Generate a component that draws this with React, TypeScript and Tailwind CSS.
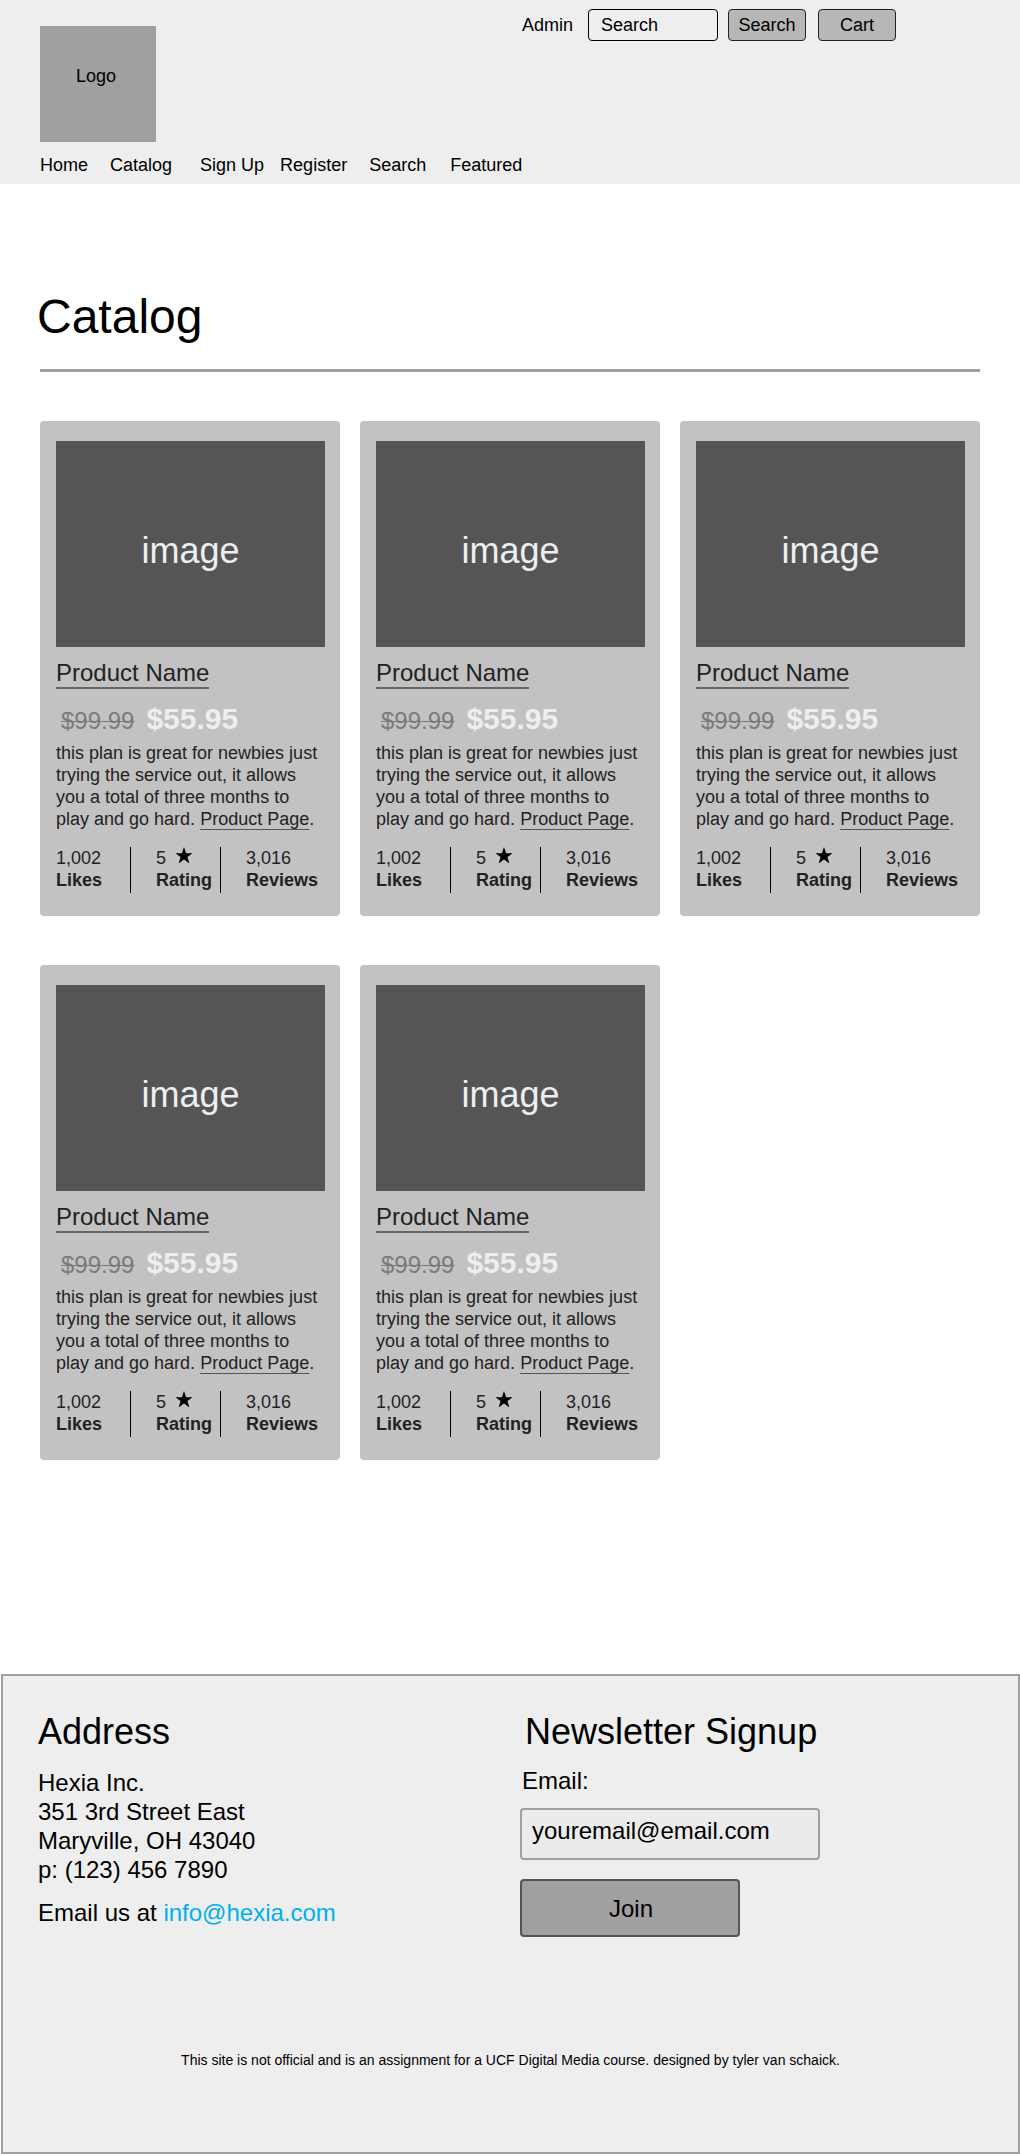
import React from "react";

type NavItem = { label: string; spacing: string };

const navItems: NavItem[] = [
  { label: "Home", spacing: "mr-[22px]" },
  { label: "Catalog", spacing: "mr-7" },
  { label: "Sign Up", spacing: "mr-4" },
  { label: "Register", spacing: "mr-[22px]" },
  { label: "Search", spacing: "mr-6" },
  { label: "Featured", spacing: "" },
];

type Product = {
  id: number;
  name: string;
  oldPrice: string;
  price: string;
  likes: string;
  rating: string;
  reviews: string;
};

const products: Product[] = [1, 2, 3, 4, 5].map((id) => ({
  id,
  name: "Product Name",
  oldPrice: "$99.99",
  price: "$55.95",
  likes: "1,002",
  rating: "5",
  reviews: "3,016",
}));

function Star() {
  return (
    <svg
      viewBox="0 0 18 17"
      className="ml-[9px] h-[17px] w-[18px]"
      fill="#000"
      aria-hidden="true"
    >
      <path d="M9 0 L11.1 6.2 H17.6 L12.4 10.1 L14.4 16.4 L9 12.6 L3.6 16.4 L5.6 10.1 L0.4 6.2 H6.9 Z" />
    </svg>
  );
}

function Header() {
  return (
    <header className="bg-[#eeeeee] pb-2">
      <div className="flex items-start">
        <div className="w-1/2 pl-10 pt-[26px]">
          <a
            href="#"
            className="flex h-[116px] w-[116px] justify-center bg-[#a0a0a0] pt-[39px] pr-1"
          >
            Logo
          </a>
        </div>
        <div className="flex w-1/2 items-center pl-3 pt-[9px]">
          <a href="#" className="mr-[15px]">
            Admin
          </a>
          <form
            className="flex items-center"
            onSubmit={(e) => e.preventDefault()}
          >
            <input
              type="search"
              aria-label="Search"
              placeholder="Search"
              className="mr-2.5 h-8 w-[130px] rounded border border-black bg-transparent px-3 placeholder:text-black placeholder:opacity-100"
            />
            <button
              type="submit"
              className="mr-3 h-8 w-[78px] rounded border border-[#222222] bg-[#b7b7b7]"
            >
              Search
            </button>
          </form>
          <button
            type="button"
            className="h-8 w-[78px] rounded border border-[#222222] bg-[#b7b7b7]"
          >
            Cart
          </button>
        </div>
      </div>
      <nav className="mt-3 flex pl-10">
        {navItems.map((item) => (
          <a key={item.label} href="#" className={item.spacing}>
            {item.label}
          </a>
        ))}
      </nav>
    </header>
  );
}

function ProductCard({ product }: { product: Product }) {
  return (
    <article className="rounded bg-[#c2c2c2] pt-5 pr-[15px] pb-[23px] pl-4 text-[#222222]">
      <div className="flex h-[206px] items-center justify-center bg-[#555555] pt-[14px] text-4xl text-[#eeeeee]">
        image
      </div>
      <h2 className="mt-3 flex text-2xl leading-7">
        <a href="#" className="border-b-2 border-[#666666]">
          {product.name}
        </a>
      </h2>
      <p className="mt-3 flex h-9 items-baseline gap-3 pl-[5px]">
        <s className="text-2xl leading-7 text-[#7b7b7b] decoration-1">
          {product.oldPrice}
        </s>
        <strong className="text-3xl leading-9 font-bold text-[#eeeeee]">
          {product.price}
        </strong>
      </p>
      <p className="mt-[5px]">
        this plan is great for newbies just trying the service out, it allows
        you a total of three months to play and go hard.{" "}
        <a
          href="#"
          className="underline decoration-[#555555] decoration-1 underline-offset-4 [text-decoration-skip-ink:none]"
        >
          Product Page
        </a>
        .
      </p>
      <dl className="mt-[17px] grid grid-cols-[74px_90px_1fr]">
        <div className="flex h-[46px] flex-col-reverse justify-end">
          <dt className="font-bold">Likes</dt>
          <dd>{product.likes}</dd>
        </div>
        <div className="flex h-[46px] flex-col-reverse justify-end border-l border-black pl-[25px]">
          <dt className="font-bold">Rating</dt>
          <dd className="flex items-start">
            {product.rating}
            <Star />
          </dd>
        </div>
        <div className="flex h-[46px] flex-col-reverse justify-end border-l border-black pl-[25px]">
          <dt className="font-bold">Reviews</dt>
          <dd>{product.reviews}</dd>
        </div>
      </dl>
    </article>
  );
}

function Footer() {
  return (
    <footer className="ml-px border-2 border-[#a0a0a0] bg-[#eeeeee] pt-[34px] pb-[82px]">
      <div className="grid grid-cols-[482fr_498fr] pl-[35px] text-2xl leading-[29px]">
        <section>
          <h2 className="text-4xl leading-11">Address</h2>
          <address className="mt-[14px] not-italic">
            Hexia Inc.
            <br />
            351 3rd Street East
            <br />
            Maryville, OH 43040
            <br />
            p: (123) 456 7890
          </address>
          <p className="mt-[14px]">
            Email us at{" "}
            <a href="mailto:info@hexia.com" className="text-[#00aeef]">
              info@hexia.com
            </a>
          </p>
        </section>
        <section>
          <h2 className="pl-[5px] text-4xl leading-11">Newsletter Signup</h2>
          <form
            className="mt-3 flex flex-col items-start"
            onSubmit={(e) => e.preventDefault()}
          >
            <label htmlFor="newsletter-email" className="pl-0.5">
              Email:
            </label>
            <input
              id="newsletter-email"
              type="email"
              placeholder="youremail@email.com"
              className="mt-[13px] h-[52px] w-[300px] rounded border-2 border-[#a0a0a0] bg-[#ebebeb] px-2.5 pb-1.5 placeholder:text-black placeholder:opacity-100"
            />
            <button
              type="submit"
              className="mt-[19px] h-[58px] w-[220px] rounded border-2 border-[#555555] bg-[#a0a0a0] pl-0.5"
            >
              Join
            </button>
          </form>
        </section>
      </div>
      <p className="mt-[113px] text-center text-sm leading-5">
        This site is not official and is an assignment for a UCF Digital Media
        course. designed by tyler van schaick.
      </p>
    </footer>
  );
}

export default function App() {
  return (
    <div className="bg-white font-['Liberation_Sans',Arial,sans-serif] text-lg leading-[22px] text-black">
      <Header />
      <main className="px-10 pt-[109px] pb-[214px]">
        <h1 className="-ml-[3px] text-5xl leading-12">Catalog</h1>
        <hr className="mt-7 border-t-3 border-[#a0a0a0]" />
        <div className="mt-[49px] grid grid-cols-3 gap-x-5 gap-y-[49px]">
          {products.map((product) => (
            <ProductCard key={product.id} product={product} />
          ))}
        </div>
      </main>
      <Footer />
    </div>
  );
}
